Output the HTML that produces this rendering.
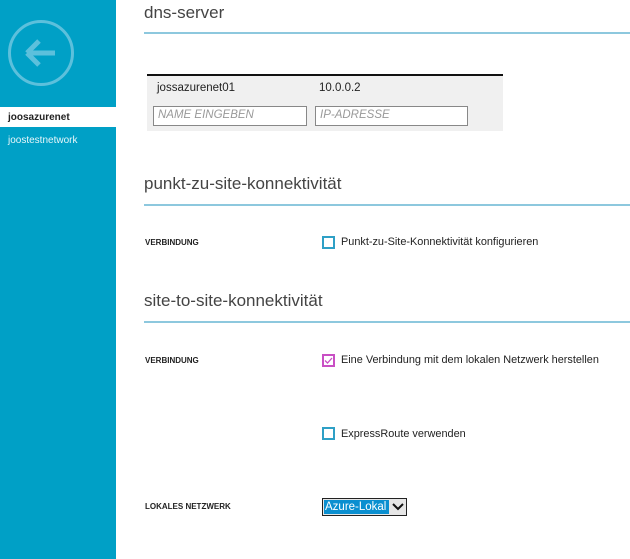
<!DOCTYPE html>
<html><head><meta charset="utf-8"><style>
*{margin:0;padding:0;box-sizing:border-box}
body{width:630px;height:559px;overflow:hidden;background:#fff;font-family:"Segoe UI","Liberation Sans",sans-serif;color:#222;position:relative}
.side{position:absolute;left:0;top:0;width:116px;height:559px;background:#00a0c6}
.circle{position:absolute;left:8px;top:20px;width:66px;height:66px;border:3px solid #5cc0dc;border-radius:50%}
.sel{position:absolute;left:0;top:107px;width:116px;height:20px;background:#fff;font-size:10px;font-weight:bold;padding:5px 0 0 8px;color:#222}
.s2{position:absolute;left:8px;top:135px;font-size:10px;color:#e8f6fa}
.a{position:absolute}
h2{position:absolute;left:144px;font-weight:normal;font-size:17px;color:#444}
.line{position:absolute;left:144px;width:486px;height:2px;background:#8dc8de}
.lbl{position:absolute;left:145px;font-size:8px;font-weight:bold;color:#222}
.cb{position:absolute;left:322px;width:13px;height:13px;border:2px solid #2ea0c6;background:#fff}
.ct{position:absolute;left:341px;font-size:10.9px;color:#222}
.inp{position:absolute;top:106px;height:20px;border:1px solid #888;background:#fff;font-style:italic;font-size:11.5px;color:#999;padding:2px 4px}
</style></head><body>
<div class="side">
<div class="circle"><svg width="60" height="60" viewBox="0 0 60 60" style="position:absolute;left:0;top:0"><path d="M16 30H44M16 30L28 18M16 30L28 42" stroke="#5cc0dc" stroke-width="5" fill="none"/></svg></div>
<div class="sel">joosazurenet</div>
<div class="s2">joostestnetwork</div>
</div>
<h2 style="top:3px">dns-server</h2>
<div class="line" style="top:32px"></div>
<div class="a" style="left:147px;top:74px;width:356px;height:2px;background:#111"></div>
<div class="a" style="left:147px;top:76px;width:356px;height:55px;background:#f0f0f0"></div>
<div class="a" style="left:157px;top:82px;font-size:11.5px">jossazurenet01</div>
<div class="a" style="left:319px;top:82px;font-size:11.5px">10.0.0.2</div>
<div class="inp" style="left:153px;width:154px">NAME EINGEBEN</div>
<div class="inp" style="left:315px;width:153px">IP-ADRESSE</div>
<h2 style="top:174px">punkt-zu-site-konnektivität</h2>
<div class="line" style="top:204px"></div>
<div class="lbl" style="top:238px">VERBINDUNG</div>
<div class="cb" style="top:236px"></div>
<div class="ct" style="top:236px">Punkt-zu-Site-Konnektivität konfigurieren</div>
<h2 style="top:291px">site-to-site-konnektivität</h2>
<div class="line" style="top:321px"></div>
<div class="lbl" style="top:356px">VERBINDUNG</div>
<div class="cb" style="top:354px;border-color:#c94fc4"><svg width="9" height="9" style="position:absolute;left:0;top:0"><path d="M1 4.5L3.5 7L8 2" stroke="#c94fc4" stroke-width="1.3" fill="none"/></svg></div>
<div class="ct" style="top:354px">Eine Verbindung mit dem lokalen Netzwerk herstellen</div>
<div class="cb" style="top:427px"></div>
<div class="ct" style="top:428px">ExpressRoute verwenden</div>
<div class="lbl" style="top:502px">LOKALES NETZWERK</div>
<div class="a" style="left:322px;top:498px;width:85px;height:18px;border:1px solid #222;background:#e6e6e6">
<div class="a" style="left:1px;top:1px;width:65px;height:14px;background:#0a8fd0;color:#fff;font-size:11.5px;line-height:14px;padding-left:1px">Azure-Lokal</div>
<svg class="a" style="left:69px;top:3px" width="12" height="10"><path d="M1 2L6 7L11 2" stroke="#111" stroke-width="2" fill="none"/></svg>
</div>
</body></html>
